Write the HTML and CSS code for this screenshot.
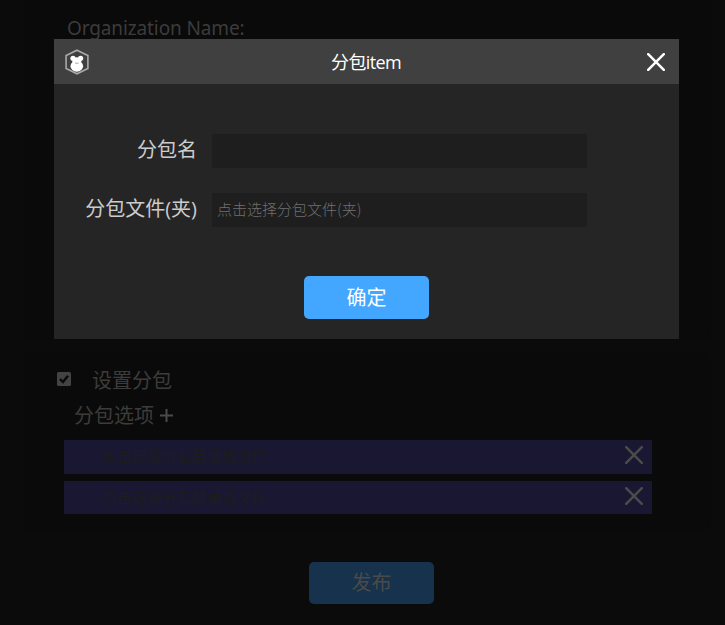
FILE: index.html
```html
<!DOCTYPE html>
<html lang="zh-CN">
<head>
<meta charset="utf-8">
<title>分包item</title>
<link rel="stylesheet" href="styles.css">
</head>
<body>
<main class="page">
  <section class="panel panel-org"><label class="org-label">Organization Name:</label></section>
  <section class="panel panel-sub">
    <div class="check-row">
      <svg class="checkbox" viewBox="0 0 14 14"><rect width="14" height="14" rx="1.5" fill="#434343"/><path d="M3 7.2l3 2.8 5-6.3" fill="none" stroke="#0a0a0a" stroke-width="2.4"/></svg>
      <span>设置分包</span>
    </div>
    <div class="options-row"><span>分包选项</span>
      <svg class="plus" viewBox="0 0 13 13"><path d="M6.5 0v13M0 6.5h13" stroke="#4a4a4a" stroke-width="2"/></svg>
    </div>
    <div class="item"><span>点击选择分包<b>目</b>录或文件</span>
      <svg class="item-close" viewBox="0 0 18 18"><path d="M1.2 1.2l15.6 15.6M16.8 1.2L1.2 16.8"/></svg>
    </div>
    <div class="item item-second"><span>点击选择分包<b>目</b>录或文件</span>
      <svg class="item-close" viewBox="0 0 18 18"><path d="M1.2 1.2l15.6 15.6M16.8 1.2L1.2 16.8"/></svg>
    </div>
  </section>
  <button class="button publish">发布</button>
</main>
<div class="modal">
  <header class="modal-head">
    <svg class="logo" viewBox="0 0 24 26"><path d="M12 1.2l10.9 5.3v13L12 24.8 1.1 19.5v-13z" fill="none" stroke="#aaa" stroke-width="1.6"/><g fill="#fff"><circle cx="8" cy="9.3" r="2.6"/><circle cx="15.6" cy="9.3" r="2.6"/><ellipse cx="11.8" cy="12" rx="4.6" ry="3.7"/><ellipse cx="11.8" cy="17.2" rx="6.3" ry="5.5"/></g><path d="M10 14.2h3.6" stroke="#bbb" stroke-width="1.3"/></svg>
    <h1>分包item</h1>
    <svg class="close" viewBox="0 0 18 18"><path d="M1.2 1.2l15.6 15.6M16.8 1.2L1.2 16.8"/></svg>
  </header>
  <form class="form">
    <label for="name">分包名</label><input id="name" type="text">
    <label for="file">分包文件(夹)</label><input id="file" type="text" placeholder="点击选择分包文件(夹)">
  </form>
  <button class="button confirm">确定</button>
</div>
</body>
</html>
```
FILE: styles.css
```css
* { box-sizing: border-box; }
body {
  margin: 0;
  width: 725px;
  height: 625px;
  overflow: hidden;
  background: #0b0b0b;
  color: #3c3c3c;
  font: 20px/28px "Open Sans", "Noto Sans CJK SC", sans-serif;
}
.page { display: flex; flex-direction: column; }
.panel { margin: 0 14px 0 23px; background: #0a0a0a; }
.panel-org { height: 340px; padding: 14px 0 0 44px; border-radius: 0 0 10px 10px; }
.org-label { font-family: "Noto Sans", sans-serif; font-size: 19px; letter-spacing: -0.12px; }
.panel-sub { height: 180px; margin-top: 11px; padding: 14px 59px 0 41px; border-radius: 10px; }
.check-row { display: flex; align-items: center; height: 28px; margin-left: -7px; }
.check-row span, .options-row span { padding-top: 4px; }
.checkbox { width: 14px; height: 14px; margin-right: 21px; }
.options-row { display: flex; align-items: center; height: 28px; margin: 7px 0 12px 10px; }
.plus { width: 13px; height: 13px; margin: 3px 0 0 6px; }
.item {
  display: flex;
  justify-content: space-between;
  align-items: flex-start;
  height: 34px;
  padding: 6px 9px 0 38px;
  background: #1a1733;
  color: #1d1d20;
  font-size: 15px;
  line-height: 20px;
}
.item b { font-weight: 500; }
.item-second { height: 33px; margin-top: 7px; }
.item-close { width: 18px; height: 18px; fill: none; stroke: #4b4b4b; stroke-width: 2.5; stroke-linecap: round; }
.button {
  display: block;
  width: 125px;
  height: 43px;
  padding: 0;
  border: 0;
  border-radius: 5px;
  background: #43a6ff;
  color: #fff;
  font: 20px/41px "Noto Sans CJK SC", sans-serif;
}
.confirm, .publish { padding-bottom: 2px; }
.publish { height: 42px; margin: 31px 0 0 309px; background: #17324c; color: #4a4a4a; line-height: 40px; }
.modal { position: absolute; left: 54px; top: 39px; width: 625px; height: 300px; background: #252525; }
.modal-head { display: flex; align-items: center; justify-content: space-between; height: 45px; padding: 0 14px 0 11px; background: #404040; }
.logo { width: 24px; height: 26px; }
.modal-head h1 { margin: 1px 4px 0 0; color: #fff; font-size: 18px; font-weight: 400; letter-spacing: -0.65px; }
.close { width: 18px; height: 18px; fill: none; stroke: #fff; stroke-width: 2.5; stroke-linecap: round; }
.form { display: grid; grid-template-columns: 144px 375px; grid-template-rows: 34px 34px; gap: 25px 14px; padding-top: 50px; }
.form label { padding: 2px 1px 0 0; color: #ccc; text-align: right; white-space: nowrap; }
.form input { padding: 0 5px 3px; border: 0; background: #1e1e1e; color: #ccc; font: 300 15px "Noto Sans CJK SC", sans-serif; }
.form input::placeholder { color: #707070; }
.confirm { margin: 49px 0 0 250px; }
```
